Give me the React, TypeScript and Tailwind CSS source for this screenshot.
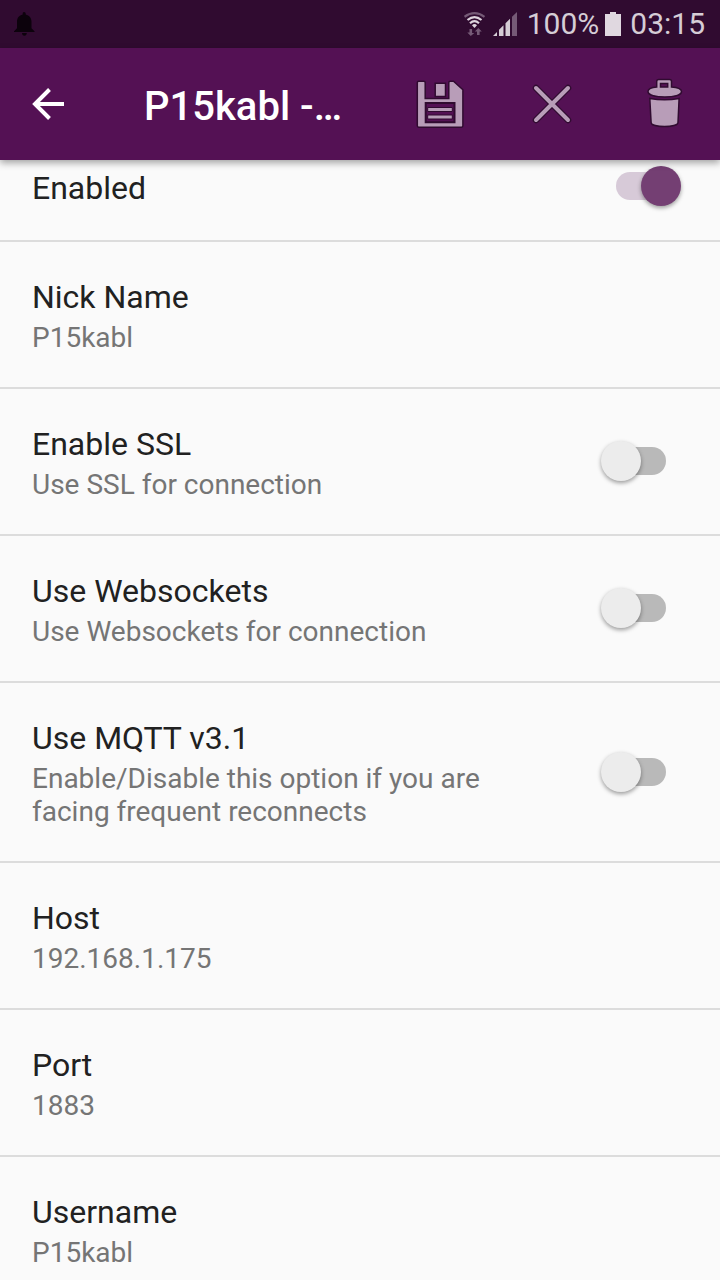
import { useState } from "react";
import type { ReactNode } from "react";

type Setting = { id: string; title: string; summary: string; toggle?: boolean };

const settings: Setting[] = [
  { id: "nick", title: "Nick Name", summary: "P15kabl" },
  { id: "ssl", title: "Enable SSL", summary: "Use SSL for connection", toggle: true },
  { id: "websockets", title: "Use Websockets", summary: "Use Websockets for connection", toggle: true },
  {
    id: "mqtt",
    title: "Use MQTT v3.1",
    summary: "Enable/Disable this option if you are facing frequent reconnects",
    toggle: true,
  },
  { id: "host", title: "Host", summary: "192.168.1.175" },
  { id: "port", title: "Port", summary: "1883" },
  { id: "username", title: "Username", summary: "P15kabl" },
];

function Switch({ id, initial }: { id: string; initial: boolean }) {
  const [on, setOn] = useState(initial);
  return (
    <span className="relative flex h-10 w-20 shrink-0 items-center justify-center">
      <input
        id={id}
        type="checkbox"
        role="switch"
        checked={on}
        onChange={() => setOn(!on)}
        className="peer absolute inset-0 m-0 cursor-pointer appearance-none"
      />
      <span className="pointer-events-none h-7 w-[50px] rounded-full bg-[#b9b9b9] peer-checked:bg-[#d7cad8]" />
      <span className="pointer-events-none absolute top-0 left-0 size-10 rounded-full bg-[#ececec] shadow-[0_2px_4px_rgba(0,0,0,0.38)] peer-checked:right-0 peer-checked:left-auto peer-checked:bg-[#743f73]" />
    </span>
  );
}

function StatusBar() {
  return (
    <div className="flex h-12 shrink-0 items-center justify-between bg-[#300b30] pr-[15px] pl-3 text-[30px] leading-9 text-[#d6cdd6]">
      <svg className="h-6 w-6" viewBox="0 0 24 24" fill="#0c020c" aria-hidden="true">
        <path d="M12 0c1 0 1.700.8 1.700 1.700v.8c3.600.8 5.800 3.600 5.800 7.500v6.300l3 3V20H2v-.7l3-3V10c0-3.900 2-6.700 5.700-7.500v-.8C10.700.8 11.200 0 12 0zM10 21h4.800c0 1.500-1 2.700-2.400 2.700S10 22.500 10 21z" />
      </svg>
      <div className="flex items-center">
        <svg className="mr-[7px] h-6 w-[22px]" viewBox="0 0 22 24" fill="none" aria-hidden="true">
          <path d="M.5 4.800Q10.500-2.500 20.500 4.800" stroke="#755a76" strokeWidth="2.200" />
          <path d="M3.500 8Q10.500 2.200 17.500 8" stroke="#ded5de" strokeWidth="2.200" />
          <path d="M6 11.200Q10.500 7.200 15 11.200" stroke="#ded5de" strokeWidth="2.200" />
          <path d="M8 13.200Q10.500 11 13 13.200L10.500 16z" fill="#ded5de" />
          <path d="M5.500 17h2.600v4h2.200L6.800 24l-3.500-3.500h2.200zM13 23h2.600v-3.500h2.200L14.300 16l-3.500 3.500H13z" fill="#755a76" />
        </svg>
        <svg className="mr-[10px] h-6 w-6" viewBox="0 0 24 24" aria-hidden="true">
          <path d="M0 24l4-4v4zM6 17.800l4.500-4.500V24H6zM12.500 11.300L17 6.800V24h-4.500z" fill="#d6cdd6" />
          <path d="M19 4.800L24 0v24h-5z" fill="#755a76" />
        </svg>
        <span>100%</span>
        <svg className="mr-[9px] ml-[6px] h-6 w-4" viewBox="0 0 16 24" fill="#e0d8e0" aria-hidden="true">
          <path d="M5 0h6v2h5v22H0V2h5z" />
        </svg>
        <span>03:15</span>
      </div>
    </div>
  );
}

function Action({ label, children }: { label: string; children: ReactNode }) {
  return (
    <button type="button" aria-label={label} className="flex h-full w-28 shrink-0 items-center justify-center">
      <svg className="size-14" viewBox="0 0 56 56" stroke="#300b30" strokeWidth="1.500" fill="#b89db8">
        {children}
      </svg>
    </button>
  );
}

function Header() {
  return (
    <header className="relative z-10 flex h-28 shrink-0 items-center bg-[#541154] shadow-[0_3px_7px_rgba(0,0,0,0.35)]">
      <button type="button" aria-label="Back" className="flex h-full w-24 shrink-0 items-center justify-center">
        <svg className="size-8" viewBox="0 0 32 32" fill="none" stroke="#fff" strokeWidth="4">
          <path d="M32 16H3M17.500 1.500L3 16l14.500 14.500" />
        </svg>
      </button>
      <h1 className="ml-12 min-w-0 flex-1 truncate pt-[6px] text-[40px] leading-12 font-medium text-white">
        P15kabl -…
      </h1>
      <Action label="Save">
        <path d="M6.700 5.200h5.100q1.400 0 1.400 1.400V22.500H36.800V6.600q0-1.400 1.400-1.400H41.500L50.900 13.800V49.800q0 1.400-1.400 1.400H6.700q-1.400 0-1.400-1.400V6.600q0-1.400 1.400-1.400z" />
        <path d="M23.200 7.200h10.300v13.300H23.200z" />
        <path d="M13.700 27h28.800v19.300H13.700z" fill="#541154" strokeWidth="2" />
        <path d="M15.700 31.500h24.600v4H15.700zM15.700 39h24.600v4H15.700z" strokeWidth="1" />
      </Action>
      <Action label="Discard">
        <path d="M12 12l32 32M44 12l-32 32" strokeWidth="6.500" strokeLinecap="round" />
        <path d="M12 12l32 32M44 12l-32 32" stroke="#b89db8" strokeWidth="4" strokeLinecap="round" />
      </Action>
      <Action label="Delete">
        <path
          d="M20.700 11V5.500q0-2 2-2H33.500q2 0 2 2V11c6 .4 10 2 10 4.600 0 3.700-8 5.300-16.600 5.300S12 19.300 12 15.600c0-2.600 3.700-4.200 8.700-4.600zm3.800-3.500V11H31.700V7.500z"
          fillRule="evenodd"
        />
        <path d="M13.800 22.500c8 1.400 21.400 1.400 29.300 0L42 46.500c-.2 5.400-26.700 5.400-26.900 0z" />
      </Action>
    </header>
  );
}

const rowClass =
  "flex w-full items-center justify-between border-b-2 border-[#dcdcdc] pt-8 pr-[39px] pb-[33px] pl-8 text-left";

function RowText({ title, summary }: { title: string; summary: string }) {
  return (
    <span className="block max-w-[472px]">
      <span className="block text-[32px] leading-[46px] text-[#212121]">{title}</span>
      <span className="mt-px block text-[28px] leading-[33px] text-[#757575]">{summary}</span>
    </span>
  );
}

export default function App() {
  return (
    <div className="flex h-screen flex-col overflow-hidden bg-[#fafafa] font-['Roboto',sans-serif]">
      <StatusBar />
      <Header />
      <main className="min-h-0 flex-1 overflow-y-auto [scrollbar-width:none]">
        <label
          htmlFor="enabled"
          className="flex items-start justify-between border-b-2 border-[#dcdcdc] pt-[6px] pr-[39px] pb-[30px] pl-8"
        >
          <span className="text-[32px] leading-11 text-[#212121]">Enabled</span>
          <Switch id="enabled" initial={true} />
        </label>
        {settings.map((s) =>
          s.toggle ? (
            <label key={s.id} htmlFor={s.id} className={rowClass}>
              <RowText title={s.title} summary={s.summary} />
              <Switch id={s.id} initial={false} />
            </label>
          ) : (
            <button key={s.id} type="button" className={rowClass}>
              <RowText title={s.title} summary={s.summary} />
            </button>
          ),
        )}
      </main>
    </div>
  );
}
